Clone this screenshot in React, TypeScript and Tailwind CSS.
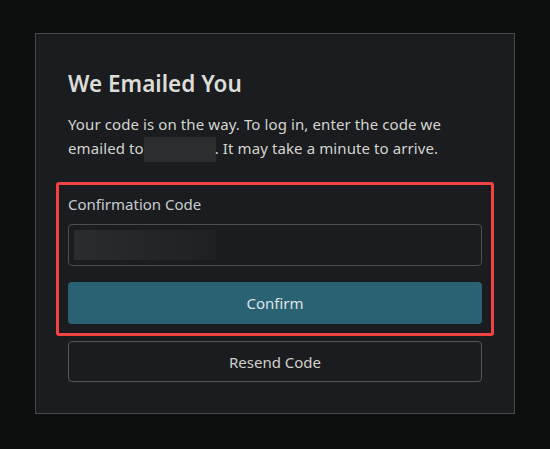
import React from 'react';

export default function App() {
  return (
    <div className="min-h-[449px] w-full bg-[#0d0e0e] pt-[33px] pl-[35px]" style={{ fontFamily: '"Noto Sans", "Open Sans", sans-serif' }}>
      <div className="w-[480px] h-[381px] border border-[#47484b] bg-[#1b1c1f] px-8 pt-[34px]">
        <h1 className="text-[22.5px] leading-[32px] font-semibold text-[#dcdcd8]">We Emailed You</h1>
        <p className="mt-[12px] text-[15px] leading-[24px] tracking-[0.1px] text-[#d4d4d0]">
          Your code is on the way. To log in, enter the code we
          <br />
          emailed to{' '}
          <span className="inline-block h-[25px] w-[72px] align-middle bg-[#2c2d2f] -ml-[4px] -mr-[1px]" />
          . It may take a minute to arrive.
        </p>

        <div className="mt-[20px] -mx-[12px] rounded-[3px] border-[3px] border-[#f04343] px-[9px] pt-[8px] pb-[9px]">
          <label className="block text-[15px] leading-[22px] text-[#c8ccd0]">Confirmation Code</label>
          <div className="mt-[9px] h-[42px] rounded-[4px] border border-[#4d4e51] p-[5px]">
            <div className="h-[30px] w-[142px] bg-gradient-to-r from-[#2b2c2d] via-[#252627] to-[#1f2021]" />
          </div>
          <button className="mt-[16px] h-[42px] w-full rounded-[4px] bg-[#2a6274] text-[15px] text-[#dde3e6]">
            Confirm
          </button>
        </div>

        <button className="mt-[5px] h-[41px] w-full rounded-[4px] border border-[#555659] text-[15px] text-[#d0d0cc]">
          Resend Code
        </button>
      </div>
    </div>
  );
}
